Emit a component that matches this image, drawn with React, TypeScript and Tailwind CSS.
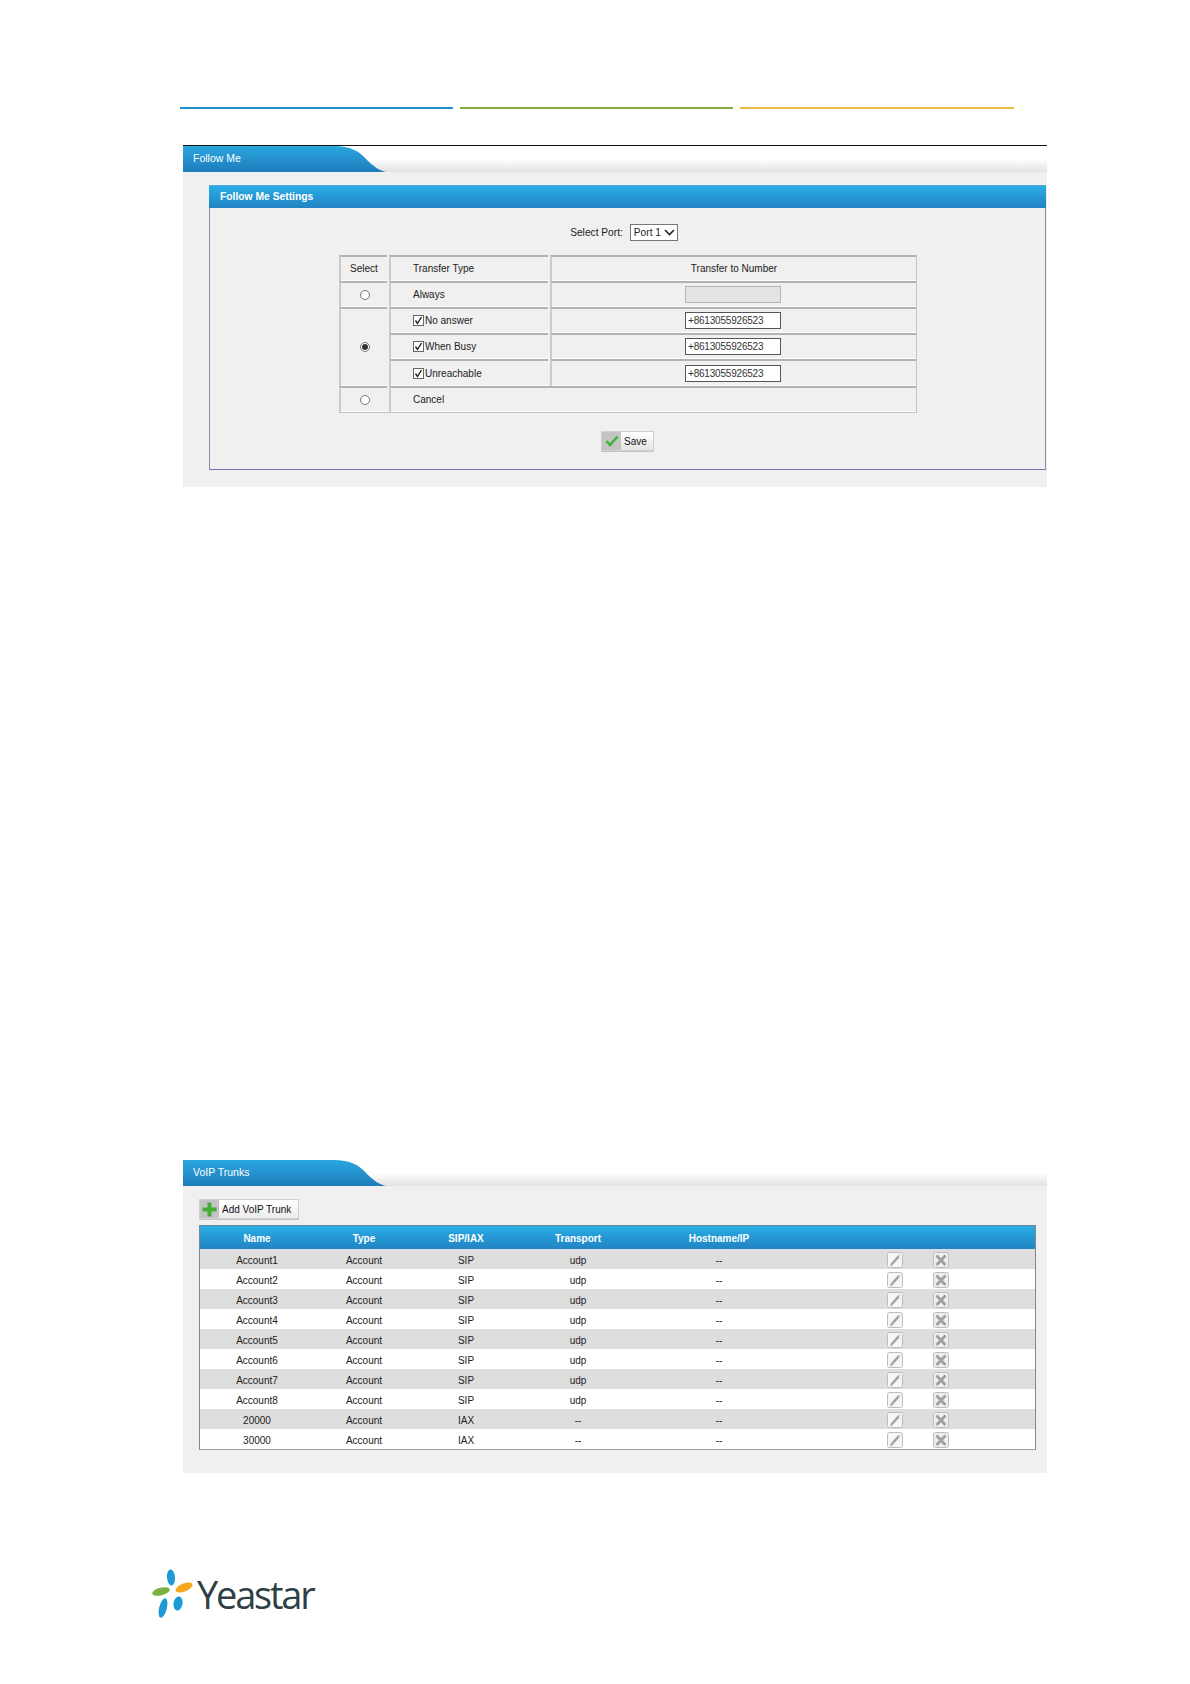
import React from 'react';

const trunks = [
  { name: 'Account1', proto: 'SIP', transport: 'udp' },
  { name: 'Account2', proto: 'SIP', transport: 'udp' },
  { name: 'Account3', proto: 'SIP', transport: 'udp' },
  { name: 'Account4', proto: 'SIP', transport: 'udp' },
  { name: 'Account5', proto: 'SIP', transport: 'udp' },
  { name: 'Account6', proto: 'SIP', transport: 'udp' },
  { name: 'Account7', proto: 'SIP', transport: 'udp' },
  { name: 'Account8', proto: 'SIP', transport: 'udp' },
  { name: '20000', proto: 'IAX', transport: '--' },
  { name: '30000', proto: 'IAX', transport: '--' },
];

const Tab: React.FC<{ title: string }> = ({ title }) => (
  <div className="h-[26px] bg-gradient-to-b from-white from-50% to-[#e2e2e2]">
    <div className="w-[203px] h-[26px] pl-[10px] pb-[1px] flex items-center text-white text-[10.5px] bg-gradient-to-b from-[#2ba6de] to-[#1e7dbd] [clip-path:path('M0_0H150C168_0_176_5_184_14C191_21_196_24_203_26H0Z')]">
      {title}
    </div>
  </div>
);

const Radio: React.FC<{ checked?: boolean }> = ({ checked }) => (
  <span className="w-[10px] h-[10px] ml-[2px] rounded-full border border-[#777] bg-white flex items-center justify-center">
    {checked && <span className="w-[6px] h-[6px] rounded-full bg-[#333]" />}
  </span>
);

const Check: React.FC = () => (
  <span className="w-[11px] h-[11px] border border-[#666] bg-white flex items-center justify-center mr-[1px]">
    <svg width="9" height="9" viewBox="0 0 9 9" fill="none">
      <path d="M1.5 4.5 L3.5 7.5 L7.5 1" stroke="#222" strokeWidth="1.4" />
    </svg>
  </span>
);

const Cell: React.FC<{ className?: string; children?: React.ReactNode }> = ({ className = '', children }) => (
  <div className={`border-t-2 border-l-2 border-t-[#b2b2b2] border-l-[#cccccc] shadow-[inset_0_-1px_0_#fff] pb-[1px] flex items-center ${className}`}>
    {children}
  </div>
);

const NumberInput: React.FC = () => (
  <input
    readOnly
    value="+8613055926523"
    className="w-[96px] h-[17px] mr-[2px] px-[2px] border border-[#555] bg-white text-[10px] tracking-[-0.2px] text-[#333] outline-none"
  />
);

const EditIcon: React.FC = () => (
  <svg width="16" height="16" viewBox="0 0 16 16" fill="none">
    <rect x="0.5" y="0.5" width="15" height="15" rx="2" fill="#f6f6f6" stroke="#bdbdbd" />
    <path d="M5 13.5 L3.5 14 L3.8 11.8 L10.8 3.5 L12.6 5 Z" fill="#9f9f9f" stroke="#bdbdbd" strokeWidth="0.6" />
    <path d="M11.4 2.8 L12.4 2.4 L13.6 3.5 L13.2 4.5 Z" fill="#b8b8b8" />
  </svg>
);

const DeleteIcon: React.FC = () => (
  <svg width="16" height="16" viewBox="0 0 16 16" fill="none">
    <rect x="0.5" y="0.5" width="15" height="15" rx="2" fill="#eeeeee" stroke="#bdbdbd" />
    <path d="M3.5 3.5 L12.5 13 M12.5 3.5 L3.5 13" stroke="#a0a0a0" strokeWidth="2.8" />
  </svg>
);

const Logo: React.FC = () => (
  <div className="flex items-center ml-[152px] mt-[95px]">
    <svg width="46" height="50" viewBox="0 0 46 50">
      <ellipse cx="19" cy="9.5" rx="4" ry="8" fill="#1b9ad6" transform="rotate(-5 19 9.5)" />
      <ellipse cx="32" cy="19.5" rx="9" ry="4" fill="#f5a81c" transform="rotate(-22 32 19.5)" />
      <ellipse cx="9" cy="23.5" rx="9" ry="3.8" fill="#7ab13c" transform="rotate(-14 9 23.5)" />
      <ellipse cx="11" cy="40" rx="3.8" ry="10" fill="#1b9ad6" transform="rotate(14 11 40)" />
      <ellipse cx="26" cy="35.5" rx="4.5" ry="7" fill="#1b9ad6" transform="rotate(10 26 35.5)" />
    </svg>
    <span className="ml-[-1px] mt-[2px] text-[38px] leading-none font-medium text-[#2f3f47] tracking-[-2.2px] font-['Open_Sans',sans-serif]">
      Yeastar
    </span>
  </div>
);

export default function App() {
  return (
    <div className="w-[1190px] h-[1684px] bg-white pt-[107px] text-[10px] text-[#222] font-['Liberation_Sans',Arial,sans-serif]">
      <div className="flex gap-[7px] ml-[180px]">
        <div className="w-[273px] h-[2px] bg-[#1b91cd]" />
        <div className="w-[273px] h-[2px] bg-[#84ab3c]" />
        <div className="w-[274px] h-[2px] bg-[#eab940]" />
      </div>

      {/* Follow Me */}
      <div className="w-[864px] ml-[183px] mt-[36px] border-t border-t-[#111]">
        <Tab title="Follow Me" />
        <div className="bg-[#f0f0f0] pl-[26px] pr-[1px] pt-[13px] pb-[17px]">
          <div className="border-x border-b border-x-[#8c8cad] border-b-[#6f75a8] h-[285px]">
            <div className="h-[23px] -mx-px pl-[11px] pb-[1px] flex items-center text-white text-[10.3px] font-bold bg-gradient-to-b from-[#29ade6] to-[#2283c2] border-t border-t-[#5aa6d6]">
              Follow Me Settings
            </div>
            <div className="flex items-center justify-center mt-[16px] h-[17px] pr-[7px] text-[10.2px]">
              <span className="mr-[7px]">Select Port:</span>
              <div className="relative w-[48px] h-[17px] border border-[#777] bg-white pl-[3px] flex items-center">
                Port 1
                <svg className="absolute right-[2px] top-[4px]" width="11" height="7" viewBox="0 0 11 7" fill="none">
                  <path d="M1 1 L5.5 5.5 L10 1" stroke="#222" strokeWidth="1.6" />
                </svg>
              </div>
            </div>

            <div className="w-[578px] ml-[129px] mt-[14px] grid grid-cols-[48px_159px_1fr] gap-x-[2px] grid-rows-[26px_26px_26px_26px_27px_26px] border-r border-b border-[#c4c4c4]">
              <Cell className="justify-center">Select</Cell>
              <Cell className="pl-[22px]">Transfer Type</Cell>
              <Cell className="justify-center">Transfer to Number</Cell>

              <Cell className="justify-center"><Radio /></Cell>
              <Cell className="pl-[22px]">Always</Cell>
              <Cell className="justify-center">
                <div className="w-[96px] h-[17px] mr-[2px] border border-[#b4b4b4] bg-[#e3e3e3]" />
              </Cell>

              <Cell className="row-span-3 justify-center"><Radio checked /></Cell>
              <Cell className="pl-[22px]"><Check />No answer</Cell>
              <Cell className="justify-center"><NumberInput /></Cell>
              <Cell className="pl-[22px]"><Check />When Busy</Cell>
              <Cell className="justify-center"><NumberInput /></Cell>
              <Cell className="pl-[22px]"><Check />Unreachable</Cell>
              <Cell className="justify-center"><NumberInput /></Cell>

              <Cell className="justify-center"><Radio /></Cell>
              <Cell className="col-span-2 pl-[22px]">Cancel</Cell>
            </div>

            <div className="w-[53px] h-[20px] mx-auto mt-[18px] flex items-center border border-[#d0d0d0] bg-gradient-to-b from-white to-[#e4e4e4] shadow-[0_1px_0_#c4c4c4]">
              <div className="w-[19px] h-full bg-[#c4c4c4] flex items-center justify-center">
                <svg width="14" height="12" viewBox="0 0 14 12" fill="none">
                  <path d="M1.5 6 L5 10 L12.5 1.5" stroke="#3fb43a" strokeWidth="2.6" />
                </svg>
              </div>
              <span className="ml-[3px] text-[#111]">Save</span>
            </div>
          </div>
        </div>
      </div>

      {/* VoIP Trunks */}
      <div className="w-[864px] ml-[183px] mt-[673px]">
        <Tab title="VoIP Trunks" />
        <div className="bg-[#f0f0f0] pl-[16px] pr-[11px] pt-[13px] pb-[23px]">
          <div className="w-[100px] h-[20px] flex items-center border border-[#d0d0d0] bg-gradient-to-b from-white to-[#ececec] shadow-[0_1px_0_#c4c4c4]">
            <div className="w-[19px] h-full bg-[#c4c4c4] flex items-center justify-center">
              <svg width="15" height="15" viewBox="0 0 15 15">
                <path d="M5.5 0.5 H9.5 V5.5 H14.5 V9.5 H9.5 V14.5 H5.5 V9.5 H0.5 V5.5 H5.5 Z" fill="#43ad34" />
              </svg>
            </div>
            <span className="ml-[3px] text-[#111] whitespace-nowrap">Add VoIP Trunk</span>
          </div>

          <div className="mt-[6px] border border-[#6f8797] border-b-[#9a9a9a] border-x-[#7a8a94]">
            <div className="h-[23px] pt-[2px] grid grid-cols-[114px_100px_104px_120px_162px_1fr] items-center text-center text-white font-bold bg-gradient-to-b from-[#29ade6] to-[#2283c2]">
              <div>Name</div>
              <div>Type</div>
              <div>SIP/IAX</div>
              <div>Transport</div>
              <div>Hostname/IP</div>
              <div />
            </div>
            {trunks.map((t, idx) => (
              <div
                key={t.name}
                className={`h-[20px] pt-[2px] grid grid-cols-[114px_100px_104px_120px_162px_1fr] items-center text-center ${idx % 2 === 0 ? 'bg-[#dedede]' : 'bg-white'}`}
              >
                <div>{t.name}</div>
                <div>Account</div>
                <div>{t.proto}</div>
                <div>{t.transport}</div>
                <div>--</div>
                <div className="flex gap-[30px] pl-[87px]">
                  <EditIcon />
                  <DeleteIcon />
                </div>
              </div>
            ))}
          </div>
        </div>
      </div>

      <Logo />
    </div>
  );
}
